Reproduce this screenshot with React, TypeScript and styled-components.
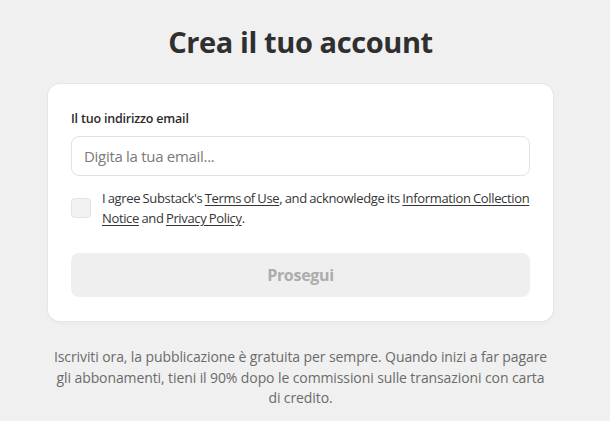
import React from "react";
import styled, { createGlobalStyle } from "styled-components";

const Global = createGlobalStyle`
  html, body { margin: 0; padding: 0; background: #f0f0f0; }
  body { font-family: "Segoe UI", "Open Sans", "Noto Sans", sans-serif; color: #333; }
`;

const Page = styled.div`
  display: flex;
  flex-direction: column;
  align-items: center;
  padding-top: 22px;
  padding-right: 9px;
`;

const Title = styled.h1`
  margin: 0;
  font-size: 29px;
  line-height: 40px;
  font-weight: 700;
  color: #2f2f2f;
  letter-spacing: -0.4px;
`;

const Card = styled.div`
  margin-top: 22px;
  width: 505px;
  box-sizing: border-box;
  background: #fff;
  border-radius: 12px;
  box-shadow: 0 0 0 1px #e6e6e6, 0 2px 4px rgba(0, 0, 0, 0.04);
  padding: 26px 23px 24px 23px;
  display: flex;
  flex-direction: column;
`;

const Label = styled.label`
  font-size: 12.5px;
  font-weight: 600;
  color: #2b2b2b;
  line-height: 18px;
  letter-spacing: -0.2px;
`;

const Input = styled.input`
  margin-top: 8px;
  height: 40px;
  box-sizing: border-box;
  border: 1px solid #e3e3e3;
  border-radius: 8px;
  padding: 0 12px;
  font-family: inherit;
  font-size: 15px;
  letter-spacing: -0.3px;
  color: #333;
  outline: none;
  &::placeholder { color: #7a7a7a; }
`;

const AgreeRow = styled.div`
  margin-top: 12px;
  display: flex;
  align-items: flex-start;
  gap: 11px;
`;

const Check = styled.span`
  flex: none;
  margin-top: 10px;
  width: 20px;
  height: 20px;
  box-sizing: border-box;
  border-radius: 4px;
  background: #f2f2f2;
  border: 1px solid #e2e2e2;
`;

const AgreeText = styled.p`
  margin: 0;
  font-size: 13px;
  line-height: 20px;
  letter-spacing: -0.35px;
  word-spacing: -0.6px;
  color: #363636;
`;

const Link = styled.a`
  color: #363636;
  text-decoration: underline;
  text-underline-offset: 2px;
`;

const Button = styled.button`
  margin-top: 25px;
  height: 44px;
  border: none;
  border-radius: 8px;
  background: #efefef;
  color: #acacac;
  font-family: inherit;
  font-size: 16px;
  font-weight: 700;
  letter-spacing: -0.3px;
`;

const Footer = styled.p`
  margin: 26px 0 0;
  width: 497px;
  text-align: center;
  font-size: 14px;
  line-height: 20.5px;
  letter-spacing: -0.1px;
  color: #6b6b6b;
`;

export default function App() {
  return (
    <>
      <Global />
      <Page>
        <Title>Crea il tuo account</Title>
        <Card>
          <Label>Il tuo indirizzo email</Label>
          <Input placeholder="Digita la tua email..." />
          <AgreeRow>
            <Check />
            <AgreeText>
              I agree Substack's <Link>Terms of Use</Link>, and acknowledge its{" "}
              <Link>Information Collection Notice</Link> and <Link>Privacy Policy</Link>.
            </AgreeText>
          </AgreeRow>
          <Button>Prosegui</Button>
        </Card>
        <Footer>
          Iscriviti ora, la pubblicazione è gratuita per sempre. Quando inizi a far pagare gli
          abbonamenti, tieni il 90% dopo le commissioni sulle transazioni con carta di credito.
        </Footer>
      </Page>
    </>
  );
}
